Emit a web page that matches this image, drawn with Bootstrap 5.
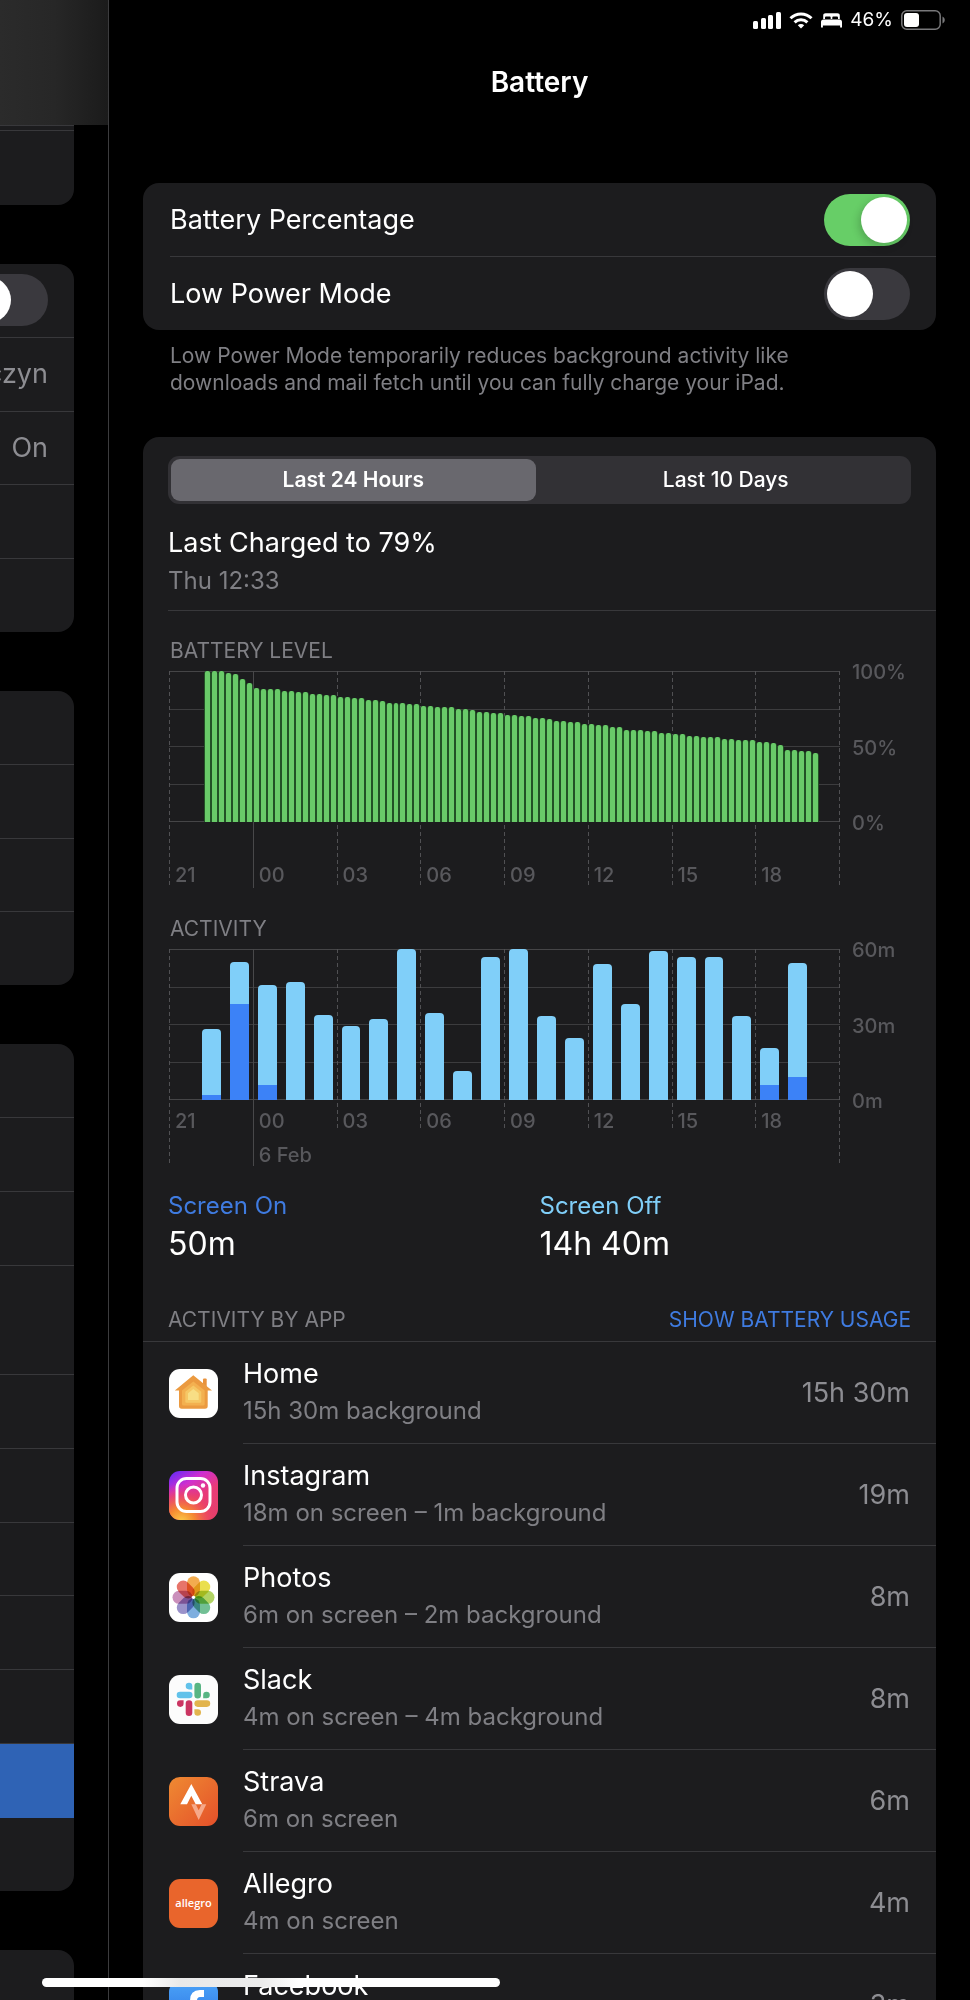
<!DOCTYPE html>
<html lang="en" data-bs-theme="dark">
<head>
<meta charset="utf-8">
<meta name="viewport" content="width=device-width, initial-scale=1">
<title>Battery</title>
<link href="https://cdn.jsdelivr.net/npm/bootstrap@5.3.0/dist/css/bootstrap.min.css" rel="stylesheet">
<style>
  :root { --cell: #1c1c1e; --rule: #38383b; --dim: #7f7f84; --faint: #58585c; --blue: #3f7be0; --sky: #80cff9; }
  body { background: #000; color: #fff; font-family: Inter, "Liberation Sans", sans-serif; font-size: 27px; line-height: 36px; }
  .shell { height: 100vh; }
  .scroller { overflow: hidden auto; scrollbar-width: none; }
  .scroller::-webkit-scrollbar { display: none; }

  /* settings list, pushed mostly off the left edge */
  .sidebar { width: 109px; border-right: 1px solid #3c3c3e; }
  .side-head { height: 125px; background: linear-gradient(90deg, #2b2b2b 0, #272727 50%, #1b1b1b 100%); }
  .side-list { padding-right: 34px; gap: 59px; }
  .side-group { background: var(--cell); border-radius: 0 16px 16px 0; overflow: hidden; flex: none; }
  .side-group.first { height: 80px; border-top: 1px solid var(--rule); border-radius: 0 0 16px 0; padding-top: 4px; }
  .side-group.rows-5 { height: 368px; }
  .side-group.rows-4 { height: 294px; }
  .side-group.rows-11 { height: 847px; }
  .side-row { flex: 1 1 0; padding-right: 26px; color: #8d8d92; border-bottom: 1px solid var(--rule); }
  .side-row:last-child { border-bottom: 0; }
  .side-row.tall { flex: 0 0 109px; }
  .side-row.current { background: #2f63b5; border-color: #2f63b5; }

  .status { height: 40px; padding: 0 25px 0 0; gap: 8px; font-size: 19px; line-height: 24px; }
  .page-title { font-size: 28px; line-height: 36px; font-weight: 600; padding: 24px 0; margin-bottom: 59px; }

  .content { padding: 0 34px; }
  .cells { background: var(--cell); border-radius: 16px; }
  .cell { height: 73px; padding-right: 26px; }
  .cell-wrap { padding-left: 27px; }
  .cell-wrap .cell + .cell { border-top: 1px solid var(--rule); height: 74px; }
  .toggle.form-check-input { width: 86px; height: 52px; margin: 0; border: 0; border-radius: 26px; background: #3a393e; padding: 3px; flex: none; box-shadow: none; }
  .toggle.form-check-input::before { content: ""; display: block; width: 46px; height: 46px; border-radius: 50%; background: #fff; }
  .toggle.form-check-input:checked { background: #67ce67; }
  .toggle.form-check-input:checked::before { margin-left: auto; box-shadow: -2px 3px 8px rgba(0,0,0,.2); }
  .note { font-size: 21px; line-height: 27px; color: var(--dim); padding: 0 27px; margin: 12px 0 41px; max-width: 720px; }

  .usage { padding-top: 19px; border-bottom-left-radius: 0; border-bottom-right-radius: 0; }
  .segments { margin: 0 25px; background: #323135; border-radius: 11px; padding: 3px; gap: 8px; }
  .segments .btn { flex: 1 1 0; height: 42px; border: 0; border-radius: 9px; padding: 0; font-size: 21px; line-height: 42px; font-weight: 500; color: #fff; }
  .segments .btn.active { background: #69686e; font-weight: 600; }
  .charged { margin: 20px 0 0 25px; padding-bottom: 10px; line-height: 38px; border-bottom: 1px solid var(--rule); }
  .dim { color: var(--dim); }
  .mid { font-size: 24px; }
  .caption-line { font-size: 21px; line-height: 24px; color: var(--dim); font-weight: 400; margin: 0; }

  /* charts: the hour columns and the bars share one grid cell */
  .chart { padding-left: 26px; margin-top: 31px; }
  .charged + .chart { margin-top: 28px; }
  .chart .caption-line { padding-left: 1px; margin-bottom: 8px; }
  .plot { display: grid; flex: 1 1 0; min-width: 0; font-size: 20px; line-height: 22px; font-weight: 500; color: var(--faint); }
  .hours, .bars { grid-area: 1 / 1; }
  .hours { display: grid; grid-template: 215px / repeat(8, minmax(0, 1fr)) 1px; height: 215px;
    background:
      linear-gradient(#454547, #454547) 0 0 / 100% 1px no-repeat,
      linear-gradient(#3c3c3e, #3c3c3e) 0 38px / 100% 1px no-repeat,
      linear-gradient(#3c3c3e, #3c3c3e) 0 75px / 100% 1px no-repeat,
      linear-gradient(#3c3c3e, #3c3c3e) 0 113px / 100% 1px no-repeat,
      linear-gradient(#454547, #454547) 0 150px / 100% 1px no-repeat; }
  .hour { display: flex; flex-direction: column; justify-content: flex-end; padding-left: 6px; white-space: nowrap;
    background: repeating-linear-gradient(#505053 0 4px, transparent 4px 7px) 0 0 / 1px 100% no-repeat; }
  .hour:last-child { padding: 0; }
  .hour.midnight { background: linear-gradient(#48484a, #48484a) 0 0 / 1px 100% no-repeat; height: 217px; padding-bottom: 2px; }
  .dated .hour { justify-content: flex-start; padding-top: 161px; height: 182px; gap: 12px; }
  .dated .hour:first-child, .dated .hour:last-child { height: 215px; }
  .dated .hour.midnight { height: 217px; padding-bottom: 0; }
  .bars { display: flex; align-items: flex-end; height: 151px; margin-right: 1px; }
  .slot { flex: 1 1 0; min-width: 0; display: flex; }
  .level { background: #225126; border-radius: 3px 3px 0 0; }
  .level i { flex: 1; margin: 0 1px; border-radius: 2px 2px 0 0; background: #69ca69; }
  .level.empty, .level.empty i { background: none; }
  .active-hour { padding: 0 4px 0 5px; }
  .active-hour span { flex: 1; display: flex; align-items: flex-end; overflow: hidden; border-radius: 4px 4px 0 0; background: var(--sky); }
  .active-hour i { width: 100%; background: #3c82f7; }
  .scale { width: 96px; height: 175px; margin: -11px 0 0; padding-left: 12px; font-size: 20px; line-height: 24px; font-weight: 500; color: var(--faint); }

  .totals { margin: 23px 25px 0; line-height: 38px; }
  .big { font-size: 32px; }
  .on { color: var(--blue); }
  .off { color: var(--sky); }
  .apps-head { margin-top: 45px; padding: 0 25px 9px; border-bottom: 1px solid var(--rule); }
  .apps-head .btn { font-size: 21px; line-height: 24px; padding: 0; border: 0; color: var(--blue); }
  .app { gap: 25px; padding-left: 26px; }
  .app-icon { width: 49px; height: 49px; flex: none; border-radius: 11px; }
  .app-body { height: 102px; padding-right: 26px; border-bottom: 1px solid var(--rule); }
  .app-body .mid { line-height: 38px; }
  .value { color: #8d8d92; }
  .home-bar { position: fixed; left: 42px; bottom: 13px; width: 458px; height: 9px; border-radius: 5px; background: linear-gradient(90deg, #fff 22%, #e9e9e9 30%, #ececec 48%, #fff 56%); z-index: 5; }
</style>
</head>
<body>
<div class="shell d-flex overflow-hidden">

  <aside class="sidebar flex-shrink-0 d-flex flex-column overflow-hidden">
    <div class="side-head flex-shrink-0"></div>
    <div class="side-list d-flex flex-column flex-grow-1 scroller">
      <div class="side-group first"><div class="border-top" style="--bs-border-color: var(--rule)"></div></div>
      <div class="side-group rows-5 d-flex flex-column">
        <div class="side-row d-flex align-items-center justify-content-end"><input class="form-check-input toggle" type="checkbox" role="switch" aria-label="Airplane Mode"></div>
        <div class="side-row d-flex align-items-center justify-content-end">czyn</div>
        <div class="side-row d-flex align-items-center justify-content-end">On</div>
        <div class="side-row"></div>
        <div class="side-row"></div>
      </div>
      <div class="side-group rows-4 d-flex flex-column">
        <div class="side-row"></div><div class="side-row"></div><div class="side-row"></div><div class="side-row"></div>
      </div>
      <div class="side-group rows-11 d-flex flex-column">
        <div class="side-row"></div><div class="side-row"></div><div class="side-row"></div>
        <div class="side-row tall"></div>
        <div class="side-row"></div><div class="side-row"></div><div class="side-row"></div><div class="side-row"></div><div class="side-row"></div>
        <div class="side-row current"></div>
        <div class="side-row"></div>
      </div>
      <div class="side-group rows-4"></div>
    </div>
  </aside>

  <main class="flex-grow-1 d-flex flex-column overflow-hidden">
    <div class="status d-flex align-items-center justify-content-end flex-shrink-0">
      <svg width="28" height="18" viewBox="0 0 28 18" fill="#fff" aria-label="Signal"><rect y="10" width="5" height="8" rx="1.5"/><rect x="8" y="7" width="5" height="11" rx="1.5"/><rect x="15" y="4" width="5" height="14" rx="1.5"/><rect x="23" y="1" width="5" height="17" rx="1.5"/></svg>
      <svg width="24" height="17" viewBox="0 0 24 17" fill="none" stroke="#fff" stroke-width="3" aria-label="Wi-Fi"><path d="M1.5 6.2a15 15 0 0 1 21 0M5.6 10.3a9.2 9.2 0 0 1 12.8 0"/><path d="M12 16.6 8.8 13.3a4.6 4.6 0 0 1 6.4 0z" fill="#fff" stroke="none"/></svg>
      <svg width="21" height="15" viewBox="0 0 21 15" fill="#fff" aria-label="Sleep"><path d="M2.200 6V2.600C2.200 1 3.100.2 4.600.2h11.800c1.500 0 2.400.8 2.400 2.400V6h-1.800V4.800c0-.9-.5-1.300-1.300-1.300h-3.200c-.8 0-1.200.4-1.200 1.200V6H9.700V4.700c0-.8-.4-1.200-1.200-1.200H5.300C4.500 3.500 4 3.900 4 4.800V6z"/><path d="M0 14.500V9c0-1.600.9-2.500 2.500-2.500h16c1.600 0 2.500.9 2.500 2.500v5.500h-1.900v-2H1.900v2z"/></svg>
      <span>46%</span>
      <svg width="44" height="20" viewBox="0 0 44 20" aria-label="Battery 46 percent"><rect x=".8" y=".8" width="38.400" height="18.400" rx="5" fill="none" stroke="#78787a" stroke-width="1.500"/><rect x="3" y="3" width="15" height="14" rx="3" fill="#fff"/><path d="M41.500 6.500c3 1.500 3 5.500 0 7z" fill="#78787a"/></svg>
    </div>
    <h1 class="page-title text-center flex-shrink-0">Battery</h1>

    <div class="content flex-grow-1 scroller">
      <section class="cells cell-wrap">
        <div class="cell d-flex align-items-center justify-content-between">
          <label for="pct">Battery Percentage</label>
          <input class="form-check-input toggle" type="checkbox" role="switch" id="pct" checked>
        </div>
        <div class="cell d-flex align-items-center justify-content-between">
          <label for="low">Low Power Mode</label>
          <input class="form-check-input toggle" type="checkbox" role="switch" id="low">
        </div>
      </section>
      <p class="note">Low Power Mode temporarily reduces background activity like downloads and mail fetch until you can fully charge your iPad.</p>

      <section class="cells usage">
        <div class="segments d-flex" role="group" aria-label="Period">
          <button type="button" class="btn active" aria-pressed="true">Last 24 Hours</button>
          <button type="button" class="btn" aria-pressed="false">Last 10 Days</button>
        </div>
        <div class="charged">
          <div>Last Charged to 79%</div>
          <div class="mid dim">Thu 12:33</div>
        </div>

        <div class="chart">
          <h2 class="caption-line">BATTERY LEVEL</h2>
          <div class="d-flex align-items-start">
            <div class="plot">
              <div class="hours">
                <span class="hour">21</span><span class="hour midnight">00</span><span class="hour">03</span><span class="hour">06</span><span class="hour">09</span><span class="hour">12</span><span class="hour">15</span><span class="hour">18</span><span class="hour"></span>
              </div>
              <div class="bars" id="levels"></div>
            </div>
            <div class="scale d-flex flex-column justify-content-between"><span>100%</span><span>50%</span><span>0%</span></div>
          </div>
        </div>

        <div class="chart">
          <h2 class="caption-line">ACTIVITY</h2>
          <div class="d-flex align-items-start">
            <div class="plot">
              <div class="hours dated">
                <span class="hour">21</span><span class="hour midnight"><span>00</span><span>6 Feb</span></span><span class="hour">03</span><span class="hour">06</span><span class="hour">09</span><span class="hour">12</span><span class="hour">15</span><span class="hour">18</span><span class="hour"></span>
              </div>
              <div class="bars" id="activity"></div>
            </div>
            <div class="scale d-flex flex-column justify-content-between"><span>60m</span><span>30m</span><span>0m</span></div>
          </div>
        </div>

        <div class="totals row g-0">
          <div class="col"><div class="mid on">Screen On</div><div class="big">50m</div></div>
          <div class="col"><div class="mid off">Screen Off</div><div class="big">14h 40m</div></div>
        </div>

        <div class="apps-head d-flex justify-content-between align-items-center">
          <h2 class="caption-line">ACTIVITY BY APP</h2>
          <button type="button" class="btn">SHOW BATTERY USAGE</button>
        </div>

        <ul class="list-unstyled m-0">
          <li class="app d-flex align-items-center">
            <svg class="app-icon" viewBox="0 0 49 49"><rect width="49" height="49" fill="#fff"/><path d="M34 17V10.500q0-1 1-1h1.700q1 0 1 1V20z" fill="#e8923c"/><path d="M24.300 6.300 43 21.500H38.700V37q0 2.700-2.700 2.700H12.700Q10 39.700 10 37V21.500H5.800z" fill="#eb9a40"/><path d="M24.300 12.500 35.700 21.500V35q0 1.500-1.500 1.500H14.500q-1.500 0-1.500-1.500V21.500z" fill="#f3b050"/><path d="M24.300 16.500 32.300 22.800V32.500q0 1.200-1.200 1.200H17.500q-1.200 0-1.200-1.200V22.800z" fill="#f6c765"/><path d="M24.300 20 29.700 24.300V31H19V24.300z" fill="#f8de85"/></svg>
            <div class="app-body flex-grow-1 d-flex align-items-center justify-content-between"><div><div>Home</div><div class="mid dim">15h 30m background</div></div><div class="value">15h 30m</div></div>
          </li>
          <li class="app d-flex align-items-center">
            <svg class="app-icon" viewBox="0 0 49 49"><defs><linearGradient id="igA" x1=".1" y1="0" x2=".75" y2="1"><stop offset="0" stop-color="#6a2bf5"/><stop offset=".3" stop-color="#cf2fd0"/><stop offset=".6" stop-color="#e93b78"/><stop offset="1" stop-color="#e5406a"/></linearGradient><radialGradient id="igB" cx=".25" cy="1.050" r=".8"><stop offset="0" stop-color="#fbd04a"/><stop offset=".35" stop-color="#f58a32"/><stop offset=".7" stop-color="#ee4a5c" stop-opacity=".7"/><stop offset="1" stop-color="#e2307e" stop-opacity="0"/></radialGradient></defs><rect width="49" height="49" fill="url(#igA)"/><rect width="49" height="49" fill="url(#igB)"/><g fill="none" stroke="#fff" stroke-width="3"><rect x="8" y="7.500" width="33" height="33" rx="9.500"/><circle cx="24.500" cy="24" r="8"/></g><circle cx="34" cy="14.500" r="2.200" fill="#fff"/></svg>
            <div class="app-body flex-grow-1 d-flex align-items-center justify-content-between"><div><div>Instagram</div><div class="mid dim">18m on screen – 1m background</div></div><div class="value">19m</div></div>
          </li>
          <li class="app d-flex align-items-center">
            <svg class="app-icon" viewBox="0 0 49 49"><rect width="49" height="49" fill="#fff"/><g transform="translate(24.500 24.300)" style="isolation:isolate" id="petals"></g><circle cx="24.500" cy="24.300" r="1.600" fill="#fff"/></svg>
            <div class="app-body flex-grow-1 d-flex align-items-center justify-content-between"><div><div>Photos</div><div class="mid dim">6m on screen – 2m background</div></div><div class="value">8m</div></div>
          </li>
          <li class="app d-flex align-items-center">
            <svg class="app-icon" viewBox="0 0 49 49"><rect width="49" height="49" fill="#fcfcfc"/><g fill="#62c2ea"><rect x="7.700" y="16.700" width="15.800" height="6.600" rx="3.300"/><path d="M23.300 14.400H20a3.300 3.300 0 1 1 3.300-3.300z"/></g><g fill="#58b583"><rect x="25.400" y="7.700" width="6.600" height="15.800" rx="3.300"/><path d="M34.200 23.300V20a3.300 3.300 0 1 1 3.300 3.300z"/></g><g fill="#e2b44e"><rect x="25.400" y="25.300" width="15.800" height="6.600" rx="3.300"/><path d="M25.400 34.200h3.300a3.300 3.300 0 1 1-3.300 3.300z"/></g><g fill="#cb3562"><rect x="16.700" y="25.300" width="6.600" height="15.800" rx="3.300"/><path d="M14.600 25.300v3.300a3.300 3.300 0 1 1-3.300-3.300z"/></g></svg>
            <div class="app-body flex-grow-1 d-flex align-items-center justify-content-between"><div><div>Slack</div><div class="mid dim">4m on screen – 4m background</div></div><div class="value">8m</div></div>
          </li>
          <li class="app d-flex align-items-center">
            <svg class="app-icon" viewBox="0 0 49 49"><defs><linearGradient id="st" x1="0" y1="0" x2="1" y2="1"><stop offset="0" stop-color="#ef8a32"/><stop offset="1" stop-color="#e4502a"/></linearGradient></defs><rect width="49" height="49" fill="url(#st)"/><path d="M22.300 7 33.300 27.300H26.700L22.300 18.700 18 27.300H11.300z" fill="#fff"/><path d="M22.300 27.300H26.700L29.700 33.300 32.700 27.300H37.300L29.700 43z" fill="#f6a98a"/></svg>
            <div class="app-body flex-grow-1 d-flex align-items-center justify-content-between"><div><div>Strava</div><div class="mid dim">6m on screen</div></div><div class="value">6m</div></div>
          </li>
          <li class="app d-flex align-items-center">
            <svg class="app-icon" viewBox="0 0 49 49"><rect width="49" height="49" fill="#e9652c"/><text x="24.500" y="28" text-anchor="middle" font-family="Open Sans, sans-serif" font-size="11" font-weight="600" fill="#fff">allegro</text></svg>
            <div class="app-body flex-grow-1 d-flex align-items-center justify-content-between"><div><div>Allegro</div><div class="mid dim">4m on screen</div></div><div class="value">4m</div></div>
          </li>
          <li class="app d-flex align-items-center">
            <svg class="app-icon" viewBox="0 0 49 49"><defs><linearGradient id="fb" x1="0" y1="0" x2="0" y2="1"><stop offset="0" stop-color="#4ba3f8"/><stop offset="1" stop-color="#2a6fe0"/></linearGradient></defs><rect width="49" height="49" fill="url(#fb)"/><path d="M35 12.500h-4q-6.500 0-6.500 7V49M18 27.500h16" fill="none" stroke="#fff" stroke-width="7"/></svg>
            <div class="app-body flex-grow-1 d-flex align-items-center justify-content-between"><div><div>Facebook</div><div class="mid dim">2m on screen</div></div><div class="value">3m</div></div>
          </li>
        </ul>
      </section>
    </div>
  </main>
</div>
<div class="home-bar"></div>

<script>
  // battery level per quarter hour, starting at 22:15
  const levels = [100,100,100,99,98,95,92,89,88,88,88,87,87,86,86,85,85,84,84,83,83,82,82,81,81,80,79,79,79,78,78,77,77,76,76,76,75,75,74,73,73,72,72,71,71,70,70,69,69,68,67,67,66,66,65,65,64,64,63,63,61,61,61,60,60,59,59,58,58,57,57,56,56,56,55,55,54,54,54,53,53,52,51,48,48,47,47,46];
  const day = [...Array(5).fill(0), ...levels, ...Array(3).fill(0)];
  document.getElementById('levels').innerHTML = day.map(v =>
    `<div class="slot level${v ? '' : ' empty'}" style="height:${v}%"><i></i></div>`).join('');

  // minutes of activity per hour: [total, with the screen on]
  const hours = [[0,0],[28.4,2],[55,38],[45.7,6],[47,0],[33.7,0],[29.3,0],[32,0],[60,0],[34.4,0],[11.7,0],[57,0],[60,0],[33.3,0],[24.8,0],[54,0],[38,0],[59.3,0],[56.8,0],[57,0],[33.3,0],[20.6,6],[54.4,9],[0,0]];
  document.getElementById('activity').innerHTML = hours.map(([all, on]) =>
    `<div class="slot active-hour" style="height:${all / 60 * 100}%"><span><i style="height:${all ? on / all * 100 : 0}%"></i></span></div>`).join('');

  const petals = ['#f2a33c','#e8dc3c','#a9cf52','#62b98a','#6fa5dc','#8f86c4','#c583b4','#e5655a'];
  document.getElementById('petals').innerHTML = petals.map((c, i) =>
    `<rect x="-6.5" y="-21" width="13" height="20" rx="6.5" fill="${c}" opacity=".9" transform="rotate(${i * 45})" style="mix-blend-mode:multiply"/>`).join('');
</script>
<script src="https://cdn.jsdelivr.net/npm/bootstrap@5.3.0/dist/js/bootstrap.bundle.min.js"></script>
</body>
</html>
